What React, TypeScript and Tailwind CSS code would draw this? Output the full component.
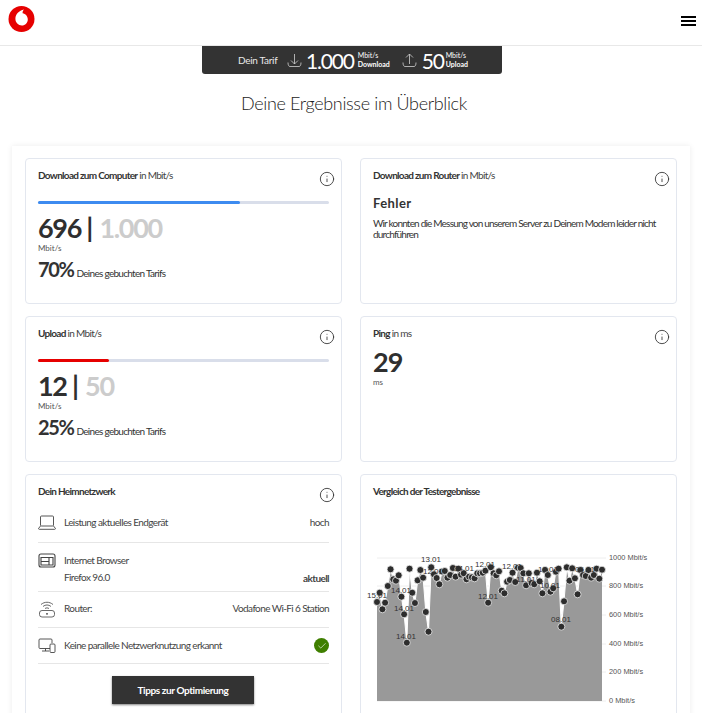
import React from 'react';
import { Info, Check } from 'lucide-react';

const sans = "font-['Lato','Noto_Sans',sans-serif]";

// y values of the measurements, x steps evenly across the plot
const points = [
  602, 592.7, 609.3, 602.7, 586, 569.3, 579.3, 580.7, 575.3, 596.7, 614.3, 642.7, 568.7, 592.7, 603, 580.3, 570, 577.7,
  612, 631.7, 567.3, 574.3, 578, 584.3, 571.5, 571, 577.7, 575, 568, 576.7, 568.7, 574.7, 573.3, 579.3, 576.7, 577.3,
  578.3, 573.3, 573.3, 572.7, 570.7, 602.7, 567.3, 573.3, 575.3, 571.3, 590.7, 593.3, 581.7, 580, 572.7, 582, 567.7,
  568, 573.3, 585.3, 573.3, 583, 584.3, 572.7, 581.3, 593.3, 570, 575, 591.7, 588.3, 571.7, 568.7, 626.7, 601.3, 567.3,
  580.7, 568.3, 578.3, 594.3, 570, 575, 576, 570, 577.7, 575, 568.7, 578.7, 569.7,
];

const labels: [string, number, number][] = [
  ['15.01', 377, 598],
  ['14.01', 401, 593],
  ['14.01', 404, 611],
  ['14.01', 406, 639],
  ['13.01', 431, 562],
  ['12.01', 433, 574],
  ['14.01', 464, 571],
  ['12.01', 485, 567],
  ['12.01', 488, 599],
  ['12.01', 512, 569],
  ['11.01', 526, 582],
  ['10.01', 548, 572],
  ['10.01', 550, 588],
  ['08.01', 561, 622],
  ['05.01', 585, 572],
];

const Chart = () => {
  const left = 377;
  const right = 602;
  const step = (right - left) / (points.length - 1);
  const xs = points.map((_, i) => left + i * step);
  const line = points.map((y, i) => `${xs[i].toFixed(1)},${y}`).join(' ');
  const ticks = [
    ['1000 Mbit/s', 558],
    ['800 Mbit/s', 586],
    ['600 Mbit/s', 615],
    ['400 Mbit/s', 644],
    ['200 Mbit/s', 672],
    ['0 Mbit/s', 701],
  ] as const;
  return (
    <svg className="-ml-[10px] mt-[42px] block" width="310" height="173" viewBox="363 540 310 173">
      {ticks.map(([t, y]) => (
        <g key={t}>
          <line x1="377" x2="606" y1={y} y2={y} stroke="#eeeeee" />
          <text x="609" y={y + 2} fontSize="7.4" fill="#555" fontFamily="Liberation Sans">{t}</text>
        </g>
      ))}
      <polygon points={`${left},701 ${line} ${right},701`} fill="#999999" />
      <polyline points={line} fill="none" stroke="#ffffff" strokeWidth="1" />
      {points.map((y, i) => (
        <circle key={i} cx={xs[i]} cy={y} r="3.5" fill="#2d2d2d" stroke="#eeeeee" strokeWidth="0.8" />
      ))}
      {labels.map(([t, x, y], i) => (
        <text key={i} x={x} y={y} textAnchor="middle" fontSize="8" fill="#333" fontFamily="Liberation Sans">{t}</text>
      ))}
    </svg>
  );
};

const Logo = () => (
  <svg width="28" height="28" viewBox="0 0 28 28">
    <circle cx="13.5" cy="14" r="13" fill="#e60000" />
    <path
      d="M14.6 8.2c2.9.6 5.2 2.8 5.2 6.2 0 3.2-2.5 6.1-6 6.1-3.5 0-6.4-2.8-6.4-6.7 0-4.8 3.7-8.2 8.6-9.3-.9.9-1.5 2.1-1.4 3.7z"
      fill="#fff"
    />
  </svg>
);

const Card = ({ className, children }: { className: string; children: React.ReactNode }) => (
  <div className={`relative rounded border border-[#e3e7ef] bg-white px-3 pt-[10px] ${className}`}>{children}</div>
);

const InfoBtn = () => (
  <Info className="absolute right-[6px] top-[12px] h-[16px] w-[16px] text-[#333]" strokeWidth={1.3} />
);

const Title = ({ bold, rest }: { bold: string; rest?: string }) => (
  <p className="text-[10px] leading-[13px] tracking-[-0.7px] text-[#444]">
    <span className="font-bold text-[#333]">{bold}</span>
    {rest}
  </p>
);

const Speed = ({
  title, fill, color, val, max, pct,
}: { title: string; fill: string; color: string; val: string; max: string; pct: string }) => (
  <>
    <Title bold={title} rest=" in Mbit/s" />
    <div className="mt-[19px] h-[3px] rounded-full bg-[#d9deea]">
      <div className={`h-full rounded-full ${fill} ${color}`} />
    </div>
    <p className="mt-[7px] text-[27px] font-bold leading-[33px] tracking-[-1.3px] text-[#2f2f2f]">
      {val} <span className="mr-[2px]">|</span> <span className="text-[#cccccc]">{max}</span>
    </p>
    <p className="text-[8px] leading-[9px] text-[#555]">Mbit/s</p>
    <p className="mt-[4px] flex items-baseline gap-[3px] text-[10px] tracking-[-0.7px] text-[#333]">
      <span className="text-[20px] font-bold leading-[24px] tracking-[-1.4px]">{pct}</span> Deines gebuchten Tarifs
    </p>
  </>
);

const DownloadIcon = ({ up }: { up?: boolean }) => (
  <svg width="15" height="16" viewBox="0 0 15 16" fill="none" stroke="#d0d0d0" strokeWidth="0.8">
    <path d="M1 10.5c0 2.5.7 4 2 4h9c1.3 0 2-1.500 2-4" />
    {up ? <path d="M7.500 12V2M4 5.500 7.500 2 11 5.500" /> : <path d="M7.500 2v10M4 8.500 7.500 12 11 8.500" />}
  </svg>
);

const Laptop = () => (
  <svg width="18" height="15" viewBox="0 0 18 15" fill="none" stroke="#444" strokeWidth="0.9">
    <rect x="2.500" y="1" width="13" height="10" rx="1" />
    <path d="M2.500 11 .5 13.500c0 .5.3.8.8.8h15.400c.5 0 .8-.3.8-.8L15.500 11" />
  </svg>
);

const Browser = () => (
  <svg width="18" height="15" viewBox="0 0 18 15" fill="none" stroke="#444" strokeWidth="1.100">
    <rect x="1" y="1" width="16" height="13" rx="2" />
    <path d="M3 4.500h12v7.500H3zM3 8.500h8M11 4.500V12" />
  </svg>
);

const Router = () => (
  <svg width="18" height="17" viewBox="0 0 18 17" fill="none" stroke="#444" strokeWidth="0.8">
    <path d="M3 3.500c3.500-3 8.500-3 12 0M5 5.500c2.500-2 5.500-2 8 0M7 7.500c1.300-.8 2.700-.8 4 0" />
    <rect x="1.500" y="9.500" width="15" height="6.500" rx="2.500" />
    <path d="M8 12.800h2" strokeWidth="1.300" />
  </svg>
);

const Devices = () => (
  <svg width="18" height="15" viewBox="0 0 18 15" fill="none" stroke="#444" strokeWidth="0.9">
    <path d="M12 10.500H2a1 1 0 0 1-1-1V2a1 1 0 0 1 1-1h11a1 1 0 0 1 1 1v3M4 13h7M7.500 10.500V13" />
    <rect x="12" y="6" width="5" height="8.500" rx="1" fill="#fff" />
  </svg>
);

const Row = ({
  icon, children, right, className,
}: { icon: React.ReactNode; children: React.ReactNode; right?: React.ReactNode; className: string }) => (
  <div className={`flex border-b border-[#e6e6e6] text-[10px] tracking-[-0.6px] text-[#444] ${className}`}>
    <div className="w-[26px] shrink-0">{icon}</div>
    <div className="flex-1">{children}</div>
    {right}
  </div>
);

export default function App() {
  return (
    <div className={`h-[713px] w-[702px] overflow-hidden bg-white ${sans}`}>
      <header className="flex h-[46px] items-start justify-between border-b border-[#e8e8e8] pl-[7.5px] pr-[6px] pt-[5px]">
        <Logo />
        <div className="mt-[11px] flex w-[15px] flex-col gap-[2px]">
          <span className="h-[2px] bg-black" />
          <span className="h-[2px] bg-black" />
          <span className="h-[2px] bg-black" />
        </div>
      </header>

      <div className="ml-[202px] flex h-[28px] w-[300px] items-center rounded-b-[3px] bg-[#333333] pl-[36px] text-white">
        <span className="mr-[8px] w-[41px] text-[10px] tracking-[-0.3px] text-[#e8e8e8]">Dein Tarif</span>
        <DownloadIcon />
        <span className="ml-[4px] text-[21px] leading-none tracking-[-1.2px]">1.000</span>
        <span className="ml-[4px] w-[37px] text-[7px] font-bold leading-[9px]"><span className="font-normal">Mbit/s</span><br />Download</span>
        <span className="ml-[7px]"><DownloadIcon up /></span>
        <span className="ml-[5px] text-[21px] leading-none tracking-[-1.2px]">50</span>
        <span className="ml-[2px] text-[7px] font-bold leading-[9px]"><span className="font-normal">Mbit/s</span><br />Upload</span>
      </div>

      <h1 className="mt-[17px] pl-[6px] text-center text-[18px] font-light leading-[24px] tracking-[-0.35px] text-[#222]">Deine Ergebnisse im Überblick</h1>

      <main className="mx-[12px] mt-[31px] grid grid-cols-[317px_317px] gap-x-[18px] gap-y-[12px] bg-white px-[13px] py-[12px] shadow-[0_0_6px_rgba(0,0,0,0.08)]">
        <Card className="h-[146px]">
          <InfoBtn />
          <Speed title="Download zum Computer" fill="w-[69.5%]" color="bg-[#3d8bf0]" val="696" max="1.000" pct="70%" />
        </Card>
        <Card className="h-[146px]">
          <InfoBtn />
          <Title bold="Download zum Router" rest=" in Mbit/s" />
          <p className="mt-[13px] text-[13px] font-bold leading-[16px] tracking-[0.4px] text-[#333]">Fehler</p>
          <p className="mt-[7px] text-[10px] leading-[11px] tracking-[-0.8px] text-[#333]">
            Wir konnten die Messung von unserem Server zu Deinem Modem leider nicht durchführen
          </p>
        </Card>
        <Card className="h-[146px]">
          <InfoBtn />
          <Speed title="Upload" fill="w-[24.5%]" color="bg-[#e60000]" val="12" max="50" pct="25%" />
        </Card>
        <Card className="h-[146px]">
          <InfoBtn />
          <Title bold="Ping" rest=" in ms" />
          <p className="mt-[5px] text-[27px] font-bold leading-[33px] tracking-[-0.8px] text-[#2f2f2f]">29</p>
          <p className="text-[8px] leading-[9px] text-[#555]">ms</p>
        </Card>
        <Card className="h-[260px]">
          <InfoBtn />
          <Title bold="Dein Heimnetzwerk" />
          <Row className="mt-[8px] h-[37px] pt-[9px]" icon={<Laptop />} right={<span>hoch</span>}>Leistung aktuelles Endgerät</Row>
          <Row
            className="h-[49px] pt-[9.5px]"
            icon={<Browser />}
            right={<span className="self-end pb-[5.5px] font-bold">aktuell</span>}
          >
            <p>Internet Browser</p>
            <p className="mt-[2px]">Firefox 96.0</p>
          </Row>
          <Row className="h-[36px] pt-[8.5px]" icon={<Router />} right={<span>Vodafone Wi-Fi 6 Station</span>}>Router:</Row>
          <Row
            className="h-[36px] items-center"
            icon={<Devices />}
            right={
              <span className="flex h-[15px] w-[15px] items-center justify-center rounded-full bg-[#3f7f00]">
                <Check className="h-[10px] w-[10px] text-white" strokeWidth={1.5} />
              </span>
            }
          >
            Keine parallele Netzwerknutzung erkannt
          </Row>
          <button className="ml-[74px] mt-[12px] block h-[28px] w-[142px] bg-[#333333] text-[10px] font-bold tracking-[-0.4px] text-white shadow-[0_1px_2px_rgba(0,0,0,0.5)]">
            Tipps zur Optimierung
          </button>
        </Card>
        <Card className="h-[260px]">
          <Title bold="Vergleich der Testergebnisse" />
          <Chart />
        </Card>
      </main>
    </div>
  );
}
